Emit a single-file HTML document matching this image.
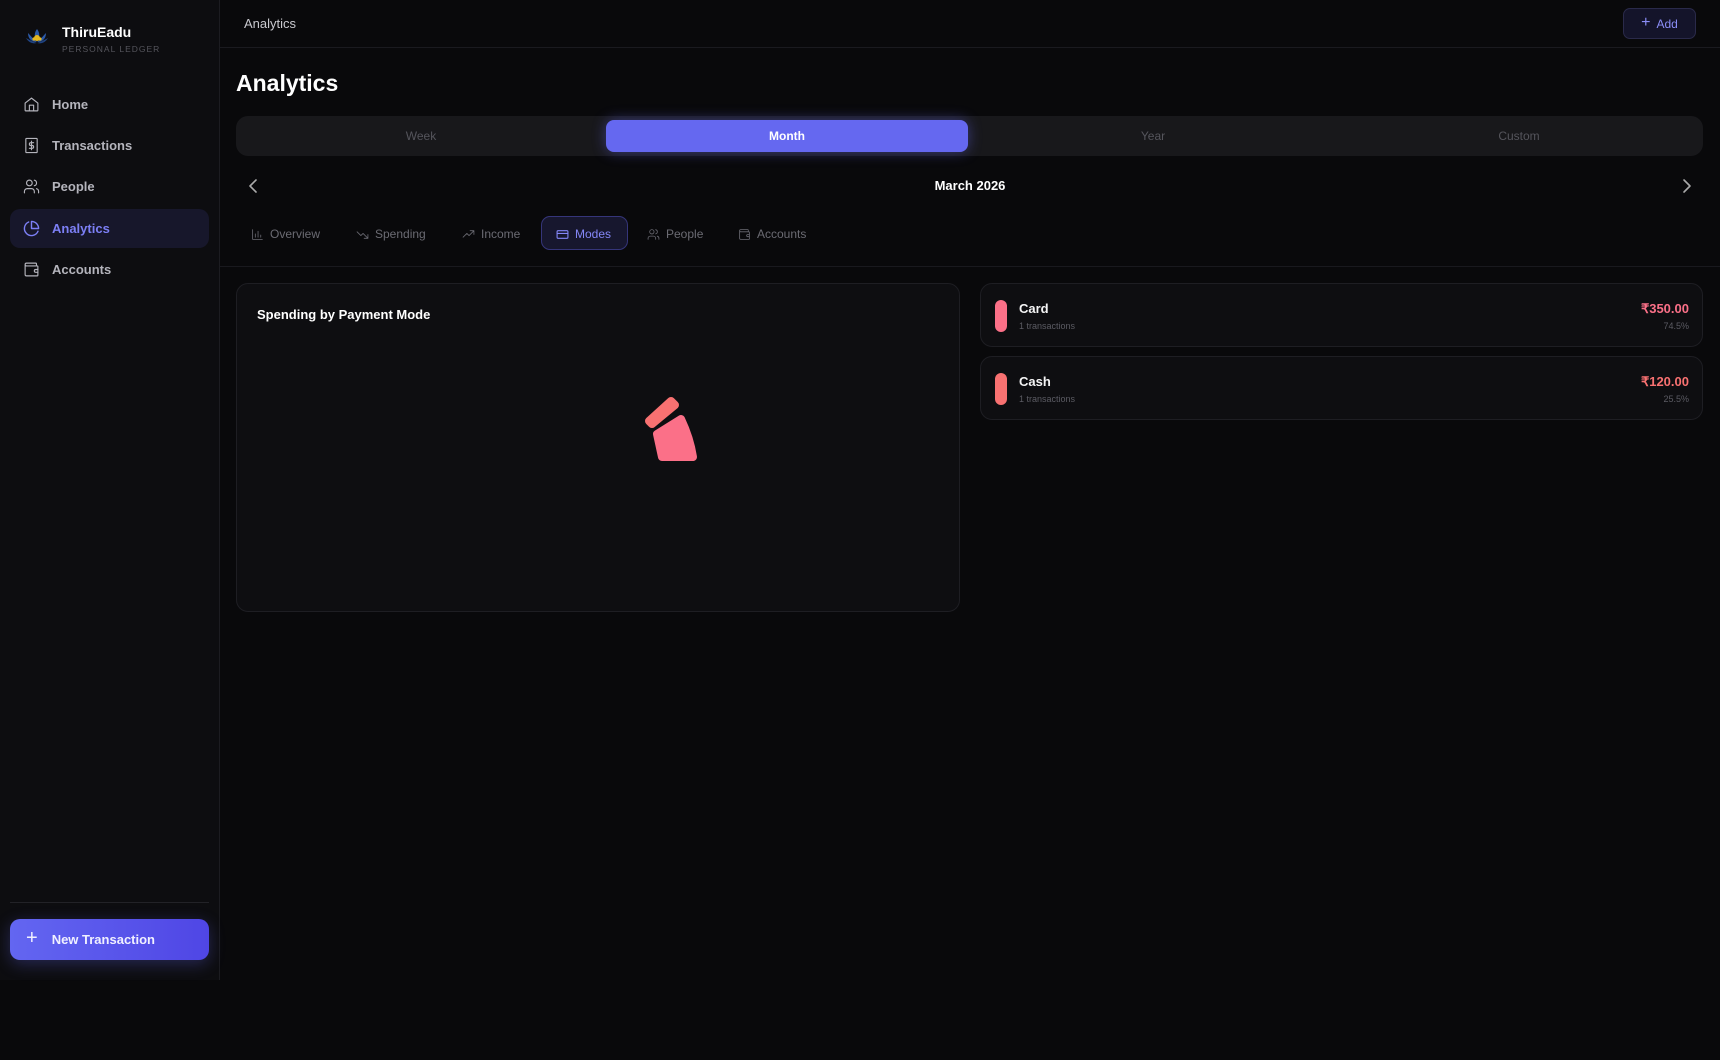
<!DOCTYPE html>
<html><head><meta charset="utf-8"><style>
*{box-sizing:border-box;margin:0;padding:0}
body{width:1720px;height:1060px;background:#09090b;font-family:"Liberation Sans",sans-serif;color:#e4e4e7;position:relative;overflow:hidden}
.side{position:absolute;left:0;top:0;width:220px;height:980px;background:#0d0d10;border-right:1px solid #1c1c21}
.abs{position:absolute}
.nav{position:absolute;left:10px;width:199px;height:39px;border-radius:10px;display:flex;align-items:center;padding-left:13px;font-size:13px;font-weight:bold;color:#b4b4bc}
.nav svg{width:17px;height:17px;margin-right:12px;fill:none;stroke:currentColor;stroke-width:1.6;stroke-linecap:round;stroke-linejoin:round}
.nav.act{background:#17172b;color:#7c7ff5}
.hdr{position:absolute;left:220px;top:0;right:0;height:48px;border-bottom:1px solid #1a1a1f}
.tabs{position:absolute;left:236px;top:116px;width:1467px;height:40px;background:#18181b;border-radius:12px}
.tab{position:absolute;top:4px;height:32px;width:362px;display:flex;align-items:center;justify-content:center;font-size:12px;color:#55555c}
.tab.act{background:#6568f0;color:#fff;font-weight:bold;border-radius:8px;box-shadow:0 0 14px rgba(99,102,241,.45)}
.st{position:absolute;top:224px;height:20px;display:flex;align-items:center;font-size:12px;color:#6b6b73}
.st svg{width:13px;height:13px;margin-right:6px;fill:none;stroke:currentColor;stroke-width:1.5;stroke-linecap:round;stroke-linejoin:round}
.card{position:absolute;background:#0e0e11;border:1px solid #1e1e23;border-radius:12px}
.row .bar{position:absolute;left:14px;top:16px;width:12px;height:32px;border-radius:6px}
.row .t{position:absolute;left:38px;top:17px;font-size:13px;font-weight:bold;color:#f4f4f5}
.row .s{position:absolute;left:38px;top:37px;font-size:9px;color:#5b5b63}
.row .a{position:absolute;right:13px;top:17px;font-size:13px;font-weight:bold}
.row .p{position:absolute;right:13px;top:37px;font-size:9px;color:#5b5b63}
</style></head><body>
<div class="side">
  <svg class="abs" style="left:25px;top:27px" width="24" height="20" viewBox="0 0 24 20">
    <path d="M12 2 C9 6 9 10 12 14 C15 10 15 6 12 2Z" fill="#2c5aa8"/>
    <path d="M3 6 C3 12 7 15 12 15 C8 12 6 9 3 6Z" fill="#2c5aa8"/>
    <path d="M21 6 C21 12 17 15 12 15 C16 12 18 9 21 6Z" fill="#2c5aa8"/>
    <path d="M1 11 C4 16 8 17 12 16 C8 15 5 13 1 11Z M23 11 C20 16 16 17 12 16 C16 15 19 13 23 11Z" fill="#1f4280"/>
    <circle cx="12" cy="11" r="3" fill="#e6b820"/><circle cx="9" cy="12" r="1.6" fill="#e6b820"/><circle cx="15" cy="12" r="1.6" fill="#e6b820"/>
  </svg>
  <div class="abs" style="left:62px;top:24px;font-size:14px;font-weight:bold;color:#fff">ThiruEadu</div>
  <div class="abs" style="left:62px;top:44px;font-size:8.5px;letter-spacing:1px;color:#55555c">PERSONAL LEDGER</div>
  <div class="nav" style="top:85px"><svg viewBox="0 0 24 24"><path d="M3 10 L12 3 L21 10 V20 a1 1 0 0 1-1 1 H4 a1 1 0 0 1-1-1Z"/><path d="M9 21 V13 h6 v8"/></svg>Home</div>
  <div class="nav" style="top:126px"><svg viewBox="0 0 24 24"><rect x="4" y="2" width="16" height="20" rx="1"/><path d="M15 8 h-4 a2 2 0 0 0 0 4 h2 a2 2 0 0 1 0 4 h-4 M12 6 v12"/></svg>Transactions</div>
  <div class="nav" style="top:167px"><svg viewBox="0 0 24 24"><circle cx="9" cy="7" r="4"/><path d="M2 21 v-2 a4 4 0 0 1 4-4 h6 a4 4 0 0 1 4 4 v2 M16 3.1 a4 4 0 0 1 0 7.8 M22 21 v-2 a4 4 0 0 0-3-3.9"/></svg>People</div>
  <div class="nav act" style="top:209px"><svg viewBox="0 0 24 24" style="stroke-width:2"><path d="M21.2 15.9 A10 10 0 1 1 8 2.8"/><path d="M22 12 A10 10 0 0 0 12 2 v10Z"/></svg>Analytics</div>
  <div class="nav" style="top:250px"><svg viewBox="0 0 24 24"><path d="M19 7 V4 a1 1 0 0 0-1-1 H5 a2 2 0 0 0 0 4 h15 a1 1 0 0 1 1 1 v12 a1 1 0 0 1-1 1 H5 a2 2 0 0 1-2-2 V5"/><path d="M21 12 h-3 a2 2 0 0 0 0 4 h3"/></svg>Accounts</div>
  <div class="abs" style="left:10px;top:902px;width:199px;height:1px;background:#222227"></div>
  <div class="abs" style="left:10px;top:919px;width:199px;height:41px;border-radius:10px;background:linear-gradient(90deg,#6366f1,#4f46e5);box-shadow:0 4px 16px rgba(99,102,241,.3);display:flex;align-items:center;padding-left:16px;font-size:13px;font-weight:bold;color:#f0f0ff"><span style="font-size:20px;font-weight:normal;margin-right:14px;margin-top:-2px">+</span>New Transaction</div>
</div>
<div class="hdr">
  <div class="abs" style="left:24px;top:16px;font-size:13px;color:#c8c8ce">Analytics</div>
  <div class="abs" style="right:24px;top:8px;width:73px;height:31px;border:1px solid #2a2a4a;background:#14142a;border-radius:7px;display:flex;align-items:center;justify-content:center;font-size:12px;color:#8b8ef7"><span style="font-size:16px;margin-right:6px;margin-top:-2px">+</span>Add</div>
</div>
<div class="abs" style="left:236px;top:70px;font-size:23px;font-weight:bold;color:#fff">Analytics</div>
<div class="tabs">
  <div class="tab" style="left:4px">Week</div>
  <div class="tab act" style="left:370px">Month</div>
  <div class="tab" style="left:736px">Year</div>
  <div class="tab" style="left:1102px">Custom</div>
</div>
<svg class="abs" style="left:247px;top:178px" width="14" height="16" viewBox="0 0 14 16"><path d="M9 2 L3 8 L9 14" fill="none" stroke="#aaa" stroke-width="1.6" stroke-linecap="round" stroke-linejoin="round"/></svg>
<svg class="abs" style="left:1679px;top:178px" width="14" height="16" viewBox="0 0 14 16"><path d="M5 2 L11 8 L5 14" fill="none" stroke="#aaa" stroke-width="1.6" stroke-linecap="round" stroke-linejoin="round"/></svg>
<div class="abs" style="left:0;width:1940px;top:178px;text-align:center;font-size:13px;font-weight:bold;color:#fff">March 2026</div>
<div class="st" style="left:251px"><svg viewBox="0 0 24 24"><path d="M3 3 v18 h18 M8 17 V11 M13 17 V6 M18 17 V13"/></svg>Overview</div>
<div class="st" style="left:356px"><svg viewBox="0 0 24 24"><path d="M2 7 l7 7 4-4 9 9 M22 12 v7 h-7"/></svg>Spending</div>
<div class="st" style="left:462px"><svg viewBox="0 0 24 24"><path d="M2 17 l7-7 4 4 9-9 M15 5 h7 v7"/></svg>Income</div>
<div class="abs" style="left:541px;top:216px;width:87px;height:34px;border:1px solid #35357a;background:#17172e;border-radius:9px"></div>
<div class="st" style="left:556px;color:#8487f7"><svg viewBox="0 0 24 24" style="stroke-width:2"><rect x="2" y="5" width="20" height="14" rx="2"/><path d="M2 10 h20"/></svg>Modes</div>
<div class="st" style="left:647px"><svg viewBox="0 0 24 24"><circle cx="9" cy="7" r="4"/><path d="M2 21 v-2 a4 4 0 0 1 4-4 h6 a4 4 0 0 1 4 4 v2 M16 3.1 a4 4 0 0 1 0 7.8 M22 21 v-2 a4 4 0 0 0-3-3.9"/></svg>People</div>
<div class="st" style="left:738px"><svg viewBox="0 0 24 24"><path d="M19 7 V4 a1 1 0 0 0-1-1 H5 a2 2 0 0 0 0 4 h15 a1 1 0 0 1 1 1 v12 a1 1 0 0 1-1 1 H5 a2 2 0 0 1-2-2 V5"/><path d="M21 12 h-3 a2 2 0 0 0 0 4 h3"/></svg>Accounts</div>
<div class="abs" style="left:220px;right:0;top:266px;height:1px;background:#19191e"></div>
<div class="card" style="left:236px;top:283px;width:724px;height:329px">
  <div class="abs" style="left:20px;top:23px;font-size:13px;font-weight:bold;color:#fff">Spending by Payment Mode</div>
</div>
<svg class="abs" style="left:0;top:0" width="1720" height="1060">
  <path d="M649 421 L671 401 L675 405 L652 424Z" fill="#f87171" stroke="#f87171" stroke-width="8" stroke-linejoin="round"/>
  <path d="M657 434 L681 419 Q690 438 693 457 L662 457Z" fill="#fb7088" stroke="#fb7088" stroke-width="8" stroke-linejoin="round"/>
</svg>
<div class="card row" style="left:980px;top:283px;width:723px;height:64px">
  <div class="bar" style="background:#fb7088"></div><div class="t">Card</div><div class="s">1 transactions</div>
  <div class="a" style="color:#fb7088">₹350.00</div><div class="p">74.5%</div>
</div>
<div class="card row" style="left:980px;top:356px;width:723px;height:64px">
  <div class="bar" style="background:#f87171"></div><div class="t">Cash</div><div class="s">1 transactions</div>
  <div class="a" style="color:#f87171">₹120.00</div><div class="p">25.5%</div>
</div>
</body></html>
